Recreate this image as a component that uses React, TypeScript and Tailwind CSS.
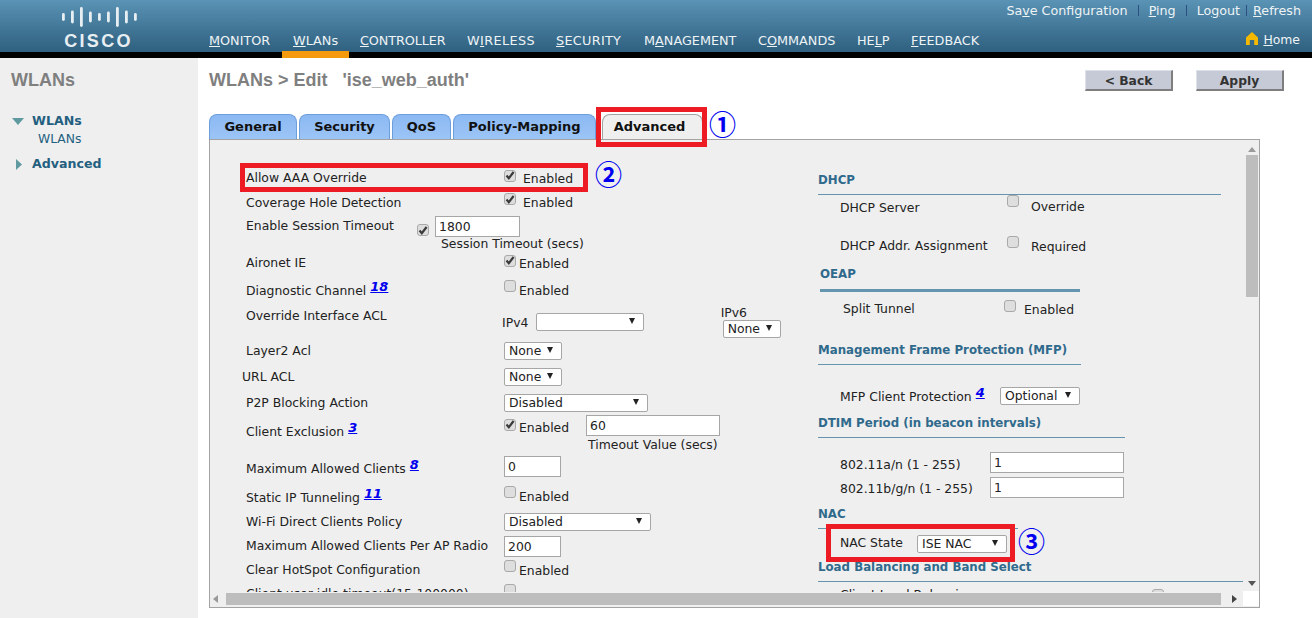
import type { ReactNode } from 'react'

const sans = "font-['DejaVu_Sans',sans-serif]"

const navItems = [
    { pre: '', u: 'M', rest: 'ONITOR', w: 'w-[84px]' },
    { pre: '', u: 'W', rest: 'LANs', w: 'w-[67px]' },
    { pre: '', u: 'C', rest: 'ONTROLLER', w: 'w-[107px] tracking-[-0.1px]' },
    { pre: 'W', u: 'I', rest: 'RELESS', w: 'w-[89px] tracking-[0.4px]' },
    { pre: '', u: 'S', rest: 'ECURITY', w: 'w-[88px] tracking-[0.3px]' },
    { pre: 'M', u: 'A', rest: 'NAGEMENT', w: 'w-[114px]' },
    { pre: 'C', u: 'O', rest: 'MMANDS', w: 'w-[99px]' },
    { pre: 'HE', u: 'L', rest: 'P', w: 'w-[54px]' },
    { pre: '', u: 'F', rest: 'EEDBACK', w: 'w-[90px]' },
]

function CiscoLogo() {
    const bars = [
        [1, 8], [10, 13], [19, 20], [28, 11], [37, 8], [46, 11], [55, 20], [64, 13], [73, 8],
    ]
    return (
        <div className="flex flex-col items-center w-[76px] -ml-[2px]">
            <svg width="76" height="22" viewBox="0 0 76 22" aria-hidden="true">
                {bars.map(([x, h]) => (
                    <rect key={x} x={x} y={(20 - h) / 2 + 1} width="2.8" height={h} rx="1.4" fill="#e8eff3" />
                ))}
            </svg>
            <span className="font-['Liberation_Sans',sans-serif] font-bold text-[18px] leading-[20px] tracking-[2.3px] text-[#e8eff3] mt-[3px]">
                CISCO
            </span>
        </div>
    )
}

function Header() {
    return (
        <header className={`${sans} h-[58px] flex border-b-[6px] border-black bg-gradient-to-b from-[#5a93b5] to-[#2f607f] text-[#eef3f6]`}>
            <div className="w-[198px] flex justify-center pt-[6px] pl-[1px]">
                <CiscoLogo />
            </div>
            <div className="flex-1 flex flex-col">
                <div className="flex justify-end items-center h-[21px] pr-[11px] text-[12.7px]">
                    <a>Sa<u>v</u>e Configuration</a>
                    <span className="mx-[10px] h-[11px] w-px bg-[#2a4f80]" />
                    <a><u>P</u>ing</a>
                    <span className="mx-[10px] h-[11px] w-px bg-[#2a4f80]" />
                    <a>Lo<u>g</u>out</a>
                    <span className="mx-[6px] h-[11px] w-px bg-[#2a4f80]" />
                    <a><u>R</u>efresh</a>
                </div>
                <div className="flex-1 flex items-stretch justify-between">
                    <nav className="flex text-[12.8px]">
                        {navItems.map(item => (
                            <a
                                key={item.rest}
                                className={`${item.w} pl-[11px] pt-[10px] -mb-[6px] ${item.u === 'W' ? 'bg-gradient-to-b from-transparent from-[80%] to-[#f49a0c] to-[80%]' : ''}`}
                            >
                                {item.pre}<u>{item.u}</u>{item.rest}
                            </a>
                        ))}
                    </nav>
                    <div className="flex items-start gap-[5px] pr-[12px] pt-[10px] text-[12.4px]">
                        <svg className="mt-[1px]" width="12" height="13" viewBox="0 0 12 13" aria-hidden="true">
                            <path d="M6 0 L12 5.5 V13 H8.2 V8 H3.8 V13 H0 V5.5 Z" fill="#f5b800" />
                        </svg>
                        <a><u>H</u>ome</a>
                    </div>
                </div>
            </div>
        </header>
    )
}

function Sidebar() {
    return (
        <aside className={`${sans} w-[198px] shrink-0 bg-[#efefef] pl-[12px] pt-[11px] text-[#245f80]`}>
            <h2 className="font-['Liberation_Sans',sans-serif] font-bold text-[18px] leading-[22px] -ml-[1px] text-[#7f7f7f]">WLANs</h2>
            <div className="mt-[20px] flex items-center gap-[8px] font-bold text-[12.6px] leading-[20px]">
                <svg width="12" height="7" viewBox="0 0 12 7" aria-hidden="true"><path d="M0 0 H12 L6 7 Z" fill="#5f9aa0" /></svg>
                WLANs
            </div>
            <div className="pl-[26px] text-[12.3px] leading-[16px]">WLANs</div>
            <div className="mt-[7px] flex items-center gap-[10px] pl-[4px] font-bold text-[12.6px] leading-[20px]">
                <svg width="6" height="11" viewBox="0 0 6 11" aria-hidden="true"><path d="M0 0 L6 5.5 L0 11 Z" fill="#5f9aa0" /></svg>
                Advanced
            </div>
        </aside>
    )
}

function Check({ on = false }: { on?: boolean }) {
    return (
        <span className="inline-flex shrink-0 items-center justify-center w-[12px] h-[12px] rounded-[3px] border border-[#a9a9a9] bg-[#dedede]">
            {on && (
                <svg width="10" height="9" viewBox="0 0 10 9" aria-hidden="true">
                    <path d="M1.5 4.6 L3.8 7.2 L8.6 1" fill="none" stroke="#3a3a3a" strokeWidth="2.2" />
                </svg>
            )}
        </span>
    )
}

function Select({ value, className }: { value?: string; className: string }) {
    return (
        <div className={`flex items-center justify-between h-[18px] pl-[4px] pr-[8px] bg-white border border-[#a6a6a6] rounded-[2px] text-[12.4px] ${className}`}>
            <span>{value}</span>
            <svg className="-translate-y-[1px]" width="6" height="6" viewBox="0 0 6 6" aria-hidden="true"><path d="M0 0 H6 L3 6 Z" fill="#222" /></svg>
        </div>
    )
}

function TextInput({ value, className }: { value: string; className: string }) {
    return (
        <input
            readOnly
            value={value}
            className={`h-[21px] px-[3px] bg-white border border-[#a6a6a6] text-[12.4px] outline-none ${className}`}
        />
    )
}

function Sup({ children }: { children: ReactNode }) {
    return (
        <a className="ml-[4px] -translate-y-[4px] inline-block font-bold italic underline text-[13px] leading-[14px] text-[#0000ee]">
            {children}
        </a>
    )
}

function Row({ h, label, children, labelClass = '' }: { h: string; label: ReactNode; children?: ReactNode; labelClass?: string }) {
    return (
        <div className={`flex items-center ${h}`}>
            <div className={`w-[258px] shrink-0 ${labelClass}`}>{label}</div>
            {children}
        </div>
    )
}

function Enabled({ on = false, wide = false, className = '' }: { on?: boolean; wide?: boolean; className?: string }) {
    return (
        <div className={`flex items-center ${className}`}>
            <span className={`-translate-y-[2px] ${wide ? 'mr-[7px]' : 'mr-[3px]'}`}><Check on={on} /></span>
            <span className="translate-y-[1px]">Enabled</span>
        </div>
    )
}

function LeftColumn() {
    return (
        <div className="w-[572px] shrink-0 pl-[36px] pt-[26px]">
            <Row h="h-[25px]" label="Allow AAA Override"><Enabled on wide /></Row>
            <Row h="h-[24px]" label="Coverage Hole Detection"><Enabled on wide className="-translate-y-[1px]" /></Row>
            <div className="flex items-center h-[22px]">
                <div className="w-[171px]">Enable Session Timeout</div>
                <span className="translate-y-[5px] mr-[6px]"><Check on /></span>
                <TextInput value="1800" className="w-[85px]" />
            </div>
            <div className="pl-[195px] h-[15px] leading-[13px]">Session Timeout (secs)</div>
            <Row h="h-[23px]" label="Aironet IE"><Enabled on /></Row>
            <Row h="h-[29px]" label={<>Diagnostic Channel<Sup>18</Sup></>} labelClass="translate-y-[2px]"><Enabled className="translate-y-[1px]" /></Row>
            <div className="flex items-start h-[34px] pt-[3px]">
                <div className="w-[256px] shrink-0">Override Interface ACL</div>
                <span className="mt-[7px] w-[34px]">IPv4</span>
                <Select className="mt-[6px] w-[109px]" />
                <div className="ml-[79px] w-[60px] -mt-[2px]">
                    <div className="leading-[15px] -ml-[2px]">IPv6</div>
                    <Select value="None" className="w-[58px]" />
                </div>
            </div>
            <Row h="h-[26px]" label="Layer2 Acl"><Select value="None" className="w-[58px]" /></Row>
            <Row h="h-[26px]" label="URL ACL" labelClass="-ml-[4px] !w-[262px]"><Select value="None" className="w-[58px]" /></Row>
            <Row h="h-[26px]" label="P2P Blocking Action"><Select value="Disabled" className="w-[144px]" /></Row>
            <div className="flex items-start h-[39px] pt-[2px]">
                <div className="w-[258px] shrink-0 mt-[5px]">Client Exclusion<Sup>3</Sup></div>
                <Enabled on />
                <div className="ml-[17px] -mt-[3px]">
                    <TextInput value="60" className="w-[134px]" />
                    <div className="leading-[14px] ml-[2px] mt-[2px]">Timeout Value (secs)</div>
                </div>
            </div>
            <Row h="h-[29px]" label={<>Maximum Allowed Clients<Sup>8</Sup></>}><TextInput value="0" className="w-[57px] -translate-y-[3px]" /></Row>
            <Row h="h-[26px]" label={<>Static IP Tunneling<Sup>11</Sup></>} labelClass="translate-y-[1px]"><Enabled className="-translate-y-[1px]" /></Row>
            <Row h="h-[24px]" label="Wi-Fi Direct Clients Policy"><Select value="Disabled" className="w-[147px]" /></Row>
            <Row h="h-[24px]" label="Maximum Allowed Clients Per AP Radio"><TextInput value="200" className="w-[57px]" /></Row>
            <Row h="h-[24px]" label="Clear HotSpot Configuration"><Enabled /></Row>
            <Row h="h-[24px]" label="Client user idle timeout(15-100000)">
                <span className="-translate-y-[2px]"><Check /></span>
            </Row>
        </div>
    )
}

function Heading({ children, line, className = '', lineClass = 'h-px mt-[6px]' }: { children: ReactNode; line: string; className?: string; lineClass?: string }) {
    return (
        <div className={className}>
            <h3 className="font-bold text-[#2f6a8c] text-[11.8px] leading-[15px]">{children}</h3>
            <div className={`${line} ${lineClass} bg-[#6594af]`} />
        </div>
    )
}

function RightColumn() {
    return (
        <div className="flex-1 pl-[36px] pt-[33px]">
            <Heading line="w-[403px]">DHCP</Heading>
            <div className="flex items-center h-[24px] pl-[22px]">
                <span className="w-[167px] translate-y-[1px]">DHCP Server</span>
                <span className="-translate-y-[4px]"><Check /></span>
                <span className="ml-[12px]">Override</span>
            </div>
            <div className="flex items-center h-[24px] mt-[15px] pl-[22px]">
                <span className="w-[167px]">DHCP Addr. Assignment</span>
                <span className="-translate-y-[2px]"><Check /></span>
                <span className="ml-[12px] translate-y-[1px]">Required</span>
            </div>
            <Heading line="w-[260px]" lineClass="h-[3px] mt-[7px]" className="mt-[9px] ml-[2px]">OEAP</Heading>
            <div className="flex items-center h-[24px] mt-[5px] pl-[25px]">
                <span className="w-[161px]">Split Tunnel</span>
                <span className="-translate-y-[1px]"><Check /></span>
                <span className="ml-[8px] translate-y-[1px]">Enabled</span>
            </div>
            <Heading line="w-[263px]" className="mt-[22px]">Management Frame Protection (MFP)</Heading>
            <div className="flex items-center h-[24px] mt-[20px] pl-[22px]">
                <span className="w-[160px] whitespace-nowrap">MFP Client Protection<Sup>4</Sup></span>
                <Select value="Optional" className="w-[80px] -translate-y-[1px]" />
            </div>
            <Heading line="w-[307px]" className="mt-[7px]">DTIM Period (in beacon intervals)</Heading>
            <div className="flex items-center h-[24px] mt-[14px] pl-[22px]">
                <span className="w-[150px] translate-y-[1px]">802.11a/n (1 - 255)</span>
                <TextInput value="1" className="w-[134px] -translate-y-[2px]" />
            </div>
            <div className="flex items-center h-[24px] pl-[22px]">
                <span className="w-[150px] translate-y-[1px]">802.11b/g/n (1 - 255)</span>
                <TextInput value="1" className="w-[134px] -translate-y-[1px]" />
            </div>
            <Heading line="w-[200px]" className="mt-[7px]">NAC</Heading>
            <div className="flex items-center h-[24px] mt-[1px] pl-[22px]">
                <span className="w-[77px] translate-y-[1px]">NAC State</span>
                <Select value="ISE NAC" className="w-[90px] translate-y-[2px]" />
            </div>
            <Heading line="w-[425px]" className="mt-[6px]">Load Balancing and Band Select</Heading>
            <div className="flex items-center h-[20px] mt-[3px] pl-[22px]">
                <span className="w-[312px]">Client Load Balancing</span>
                <Check />
            </div>
        </div>
    )
}

function Panel() {
    return (
        <div className={`${sans} relative h-[469px] border border-[#a3a3a3] bg-[#efefef] text-[12.4px] text-[#222] flex flex-col`}>
            <div className="flex h-[452px]">
                <div className="flex-1 flex overflow-hidden whitespace-nowrap">
                    <LeftColumn />
                    <RightColumn />
                </div>
                <div className="w-[16px] flex flex-col items-center pt-[7px] pb-[6px] pl-[2px]">
                    <svg width="8" height="5" viewBox="0 0 8 5" aria-hidden="true"><path d="M0 5 H8 L4 0 Z" fill="#9a9a9a" /></svg>
                    <div className="mt-[3px] w-[12px] h-[142px] bg-[#bdbdbd]" />
                    <div className="flex-1" />
                    <svg width="8" height="5" viewBox="0 0 8 5" aria-hidden="true"><path d="M0 0 H8 L4 5 Z" fill="#555" /></svg>
                </div>
            </div>
            <div className="flex items-center h-[14px] pl-[3px]">
                <svg width="5" height="8" viewBox="0 0 5 8" aria-hidden="true"><path d="M5 0 V8 L0 4 Z" fill="#9a9a9a" /></svg>
                <div className="ml-[8px] w-[995px] h-[12px] bg-[#bdbdbd]" />
                <svg className="ml-[11px]" width="5" height="8" viewBox="0 0 5 8" aria-hidden="true"><path d="M0 0 V8 L5 4 Z" fill="#444" /></svg>
                <div className="ml-[6px] w-[16px] h-[15px] -mt-[2px] bg-white" />
            </div>
        </div>
    )
}

const tabs = [
    ['General', 'w-[88px]'],
    ['Security', 'w-[91px]'],
    ['QoS', 'w-[59px]'],
    ['Policy-Mapping', 'w-[143px]'],
]

function Tabs() {
    return (
        <div className={`${sans} flex items-end gap-[2px] h-[25px] font-bold text-[13px] text-[#111]`}>
            {tabs.map(([name, w]) => (
                <div key={name} className={`${w} h-[25px] flex items-center justify-center rounded-t-[8px] border border-b-0 border-[#6d9edc] bg-gradient-to-b from-[#8cb9f3] to-[#9cc5f6]`}>
                    {name}
                </div>
            ))}
            <div className="ml-[4px] w-[101px] h-[25px] pr-[6px] flex items-center justify-center rounded-t-[8px] border border-b-0 border-[#a3a3a3] bg-[#efefef]">
                Advanced
            </div>
        </div>
    )
}

function PageButton({ children }: { children: ReactNode }) {
    return (
        <button className="w-[88px] h-[21px] pt-[1px] bg-[#c6cad6] border border-[#dfe1e8] border-r-[2px] border-b-[2px] border-r-[#7e7e7e] border-b-[#7e7e7e] text-[12.3px] font-bold text-[#333]">
            {children}
        </button>
    )
}

function Callout({ className }: { className: string }) {
    return <div className={`absolute border-[5px] border-[#ed1c24] ${className}`} />
}

function Num({ children, className }: { children: string; className: string }) {
    return (
        <span className={`absolute font-['Noto_Sans_CJK_SC',sans-serif] font-bold text-[27px] leading-[27px] text-[#0000f0] ${className}`}>
            {children}
        </span>
    )
}

export default function App() {
    return (
        <div className="relative w-[1312px] h-[618px] overflow-hidden bg-white">
            <Header />
            <div className="flex h-[560px]">
                <Sidebar />
                <main className="flex-1 flex flex-col pl-[11px] pr-[52px]">
                    <div className={`${sans} flex items-start justify-between pt-[12px] h-[56px]`}>
                        <h1 className="font-['Liberation_Sans',sans-serif] font-bold text-[18px] leading-[20px] whitespace-pre text-[#7f7f7f]">{"WLANs > Edit   'ise_web_auth'"}</h1>
                        <div className="flex gap-[23px] -mr-[24px]">
                            <PageButton>&lt; Back</PageButton>
                            <PageButton>Apply</PageButton>
                        </div>
                    </div>
                    <Tabs />
                    <Panel />
                </main>
                <div className="w-[16px] shrink-0 flex flex-col items-center bg-[#f4f4f4] pt-[6px] pl-[2px]">
                    <svg width="8" height="5" viewBox="0 0 8 5" aria-hidden="true"><path d="M0 5 H8 L4 0 Z" fill="#9a9a9a" /></svg>
                    <div className="mt-[5px] flex-1 w-[14px] bg-[#bdbdbd]" />
                </div>
            </div>

            <Callout className="left-[596px] top-[107px] w-[111px] h-[40px]" />
            <Callout className="left-[240px] top-[163px] w-[348px] h-[29px]" />
            <Callout className="left-[826px] top-[524px] w-[189px] h-[38px]" />
            <Num className="left-[709px] top-[110px]">①</Num>
            <Num className="left-[595px] top-[160px]">②</Num>
            <Num className="left-[1018px] top-[527px]">③</Num>
        </div>
    )
}
